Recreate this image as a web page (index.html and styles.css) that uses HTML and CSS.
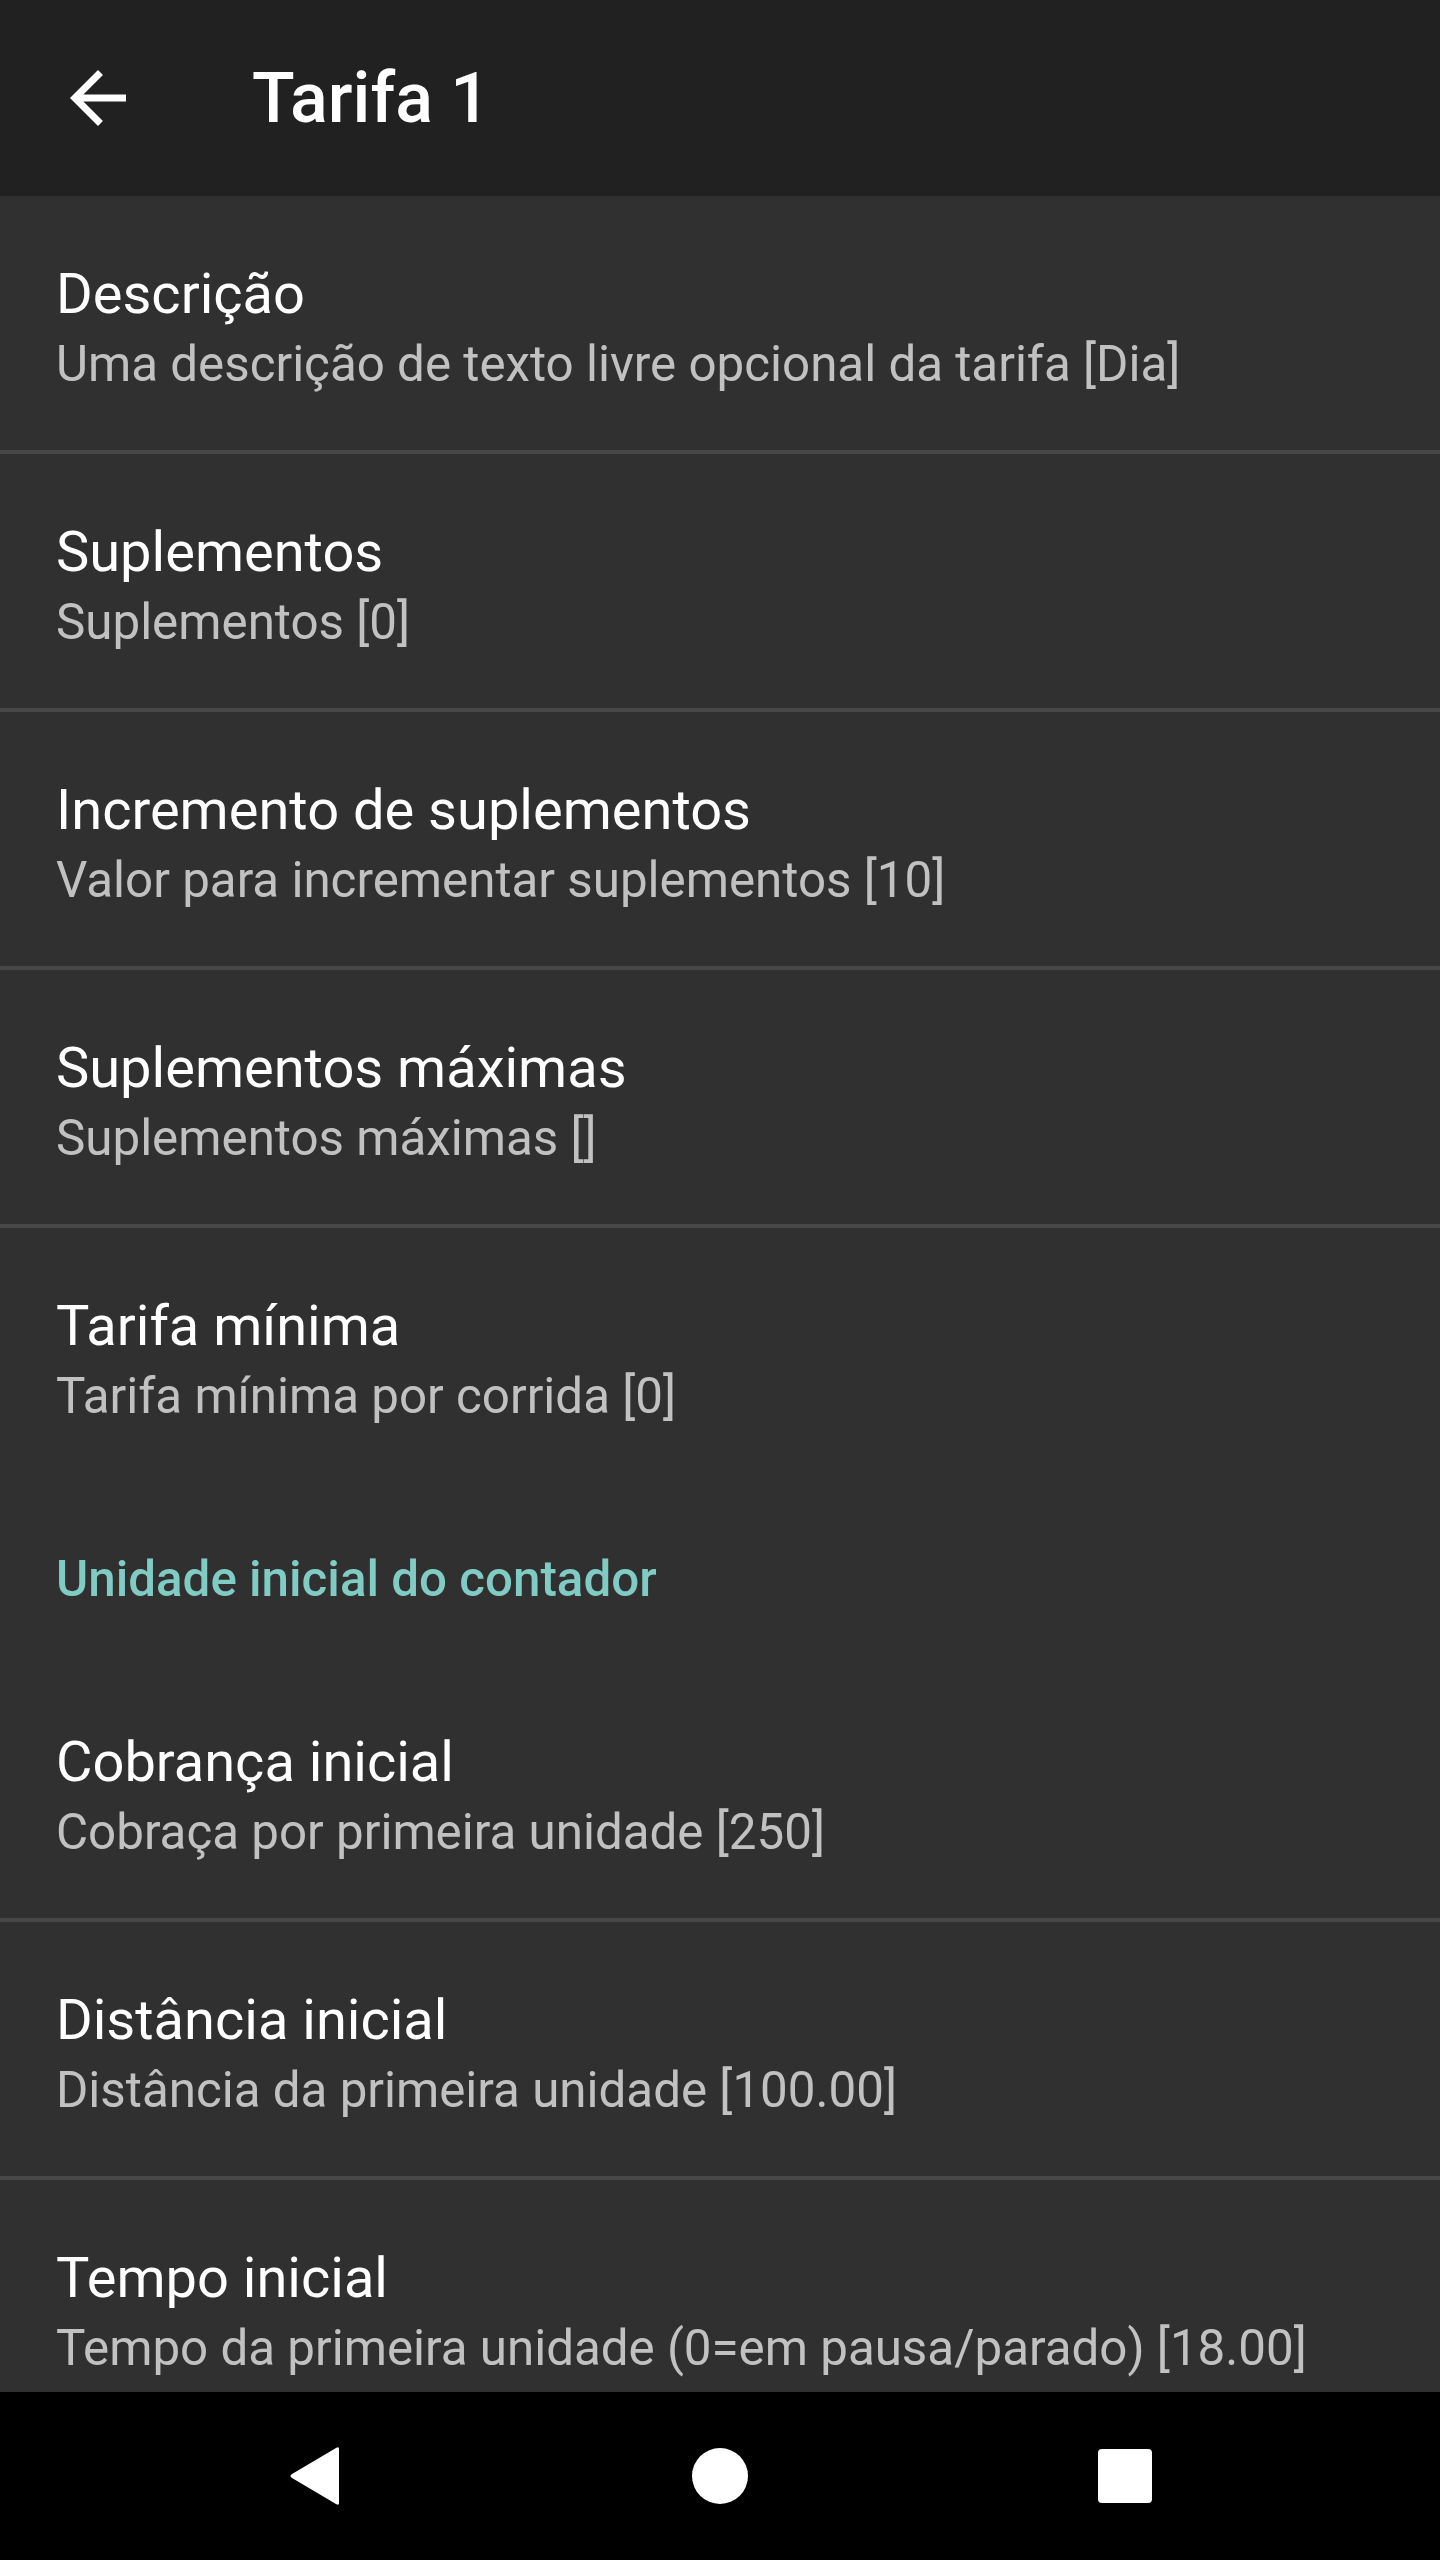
FILE: index.html
```html
<!DOCTYPE html>
<html lang="pt">

<head>
    <meta charset="UTF-8">
    <meta name="viewport" content="width=device-width, initial-scale=1.0">
    <title>Tarifa 1</title>
    <link rel="stylesheet" href="styles.css">
</head>

<body>
    <div class="screen">
        <!-- Toolbar -->
        <header class="toolbar">
            <svg class="back-icon" viewBox="0 0 24 24">
                <path d="M20 11H7.83l5.59-5.59L12 4l-8 8 8 8 1.41-1.41L7.83 13H20v-2z" fill="#fff"/>
            </svg>
            <h1 class="toolbar-title">Tarifa 1</h1>
        </header>

        <!-- Preference list -->
        <main class="prefs">
            <div class="pref">
                <div class="pref-title">Descrição</div>
                <div class="pref-summary">Uma descrição de texto livre opcional da tarifa [Dia]</div>
            </div>
            <div class="divider"></div>
            <div class="pref">
                <div class="pref-title">Suplementos</div>
                <div class="pref-summary">Suplementos [0]</div>
            </div>
            <div class="divider"></div>
            <div class="pref">
                <div class="pref-title">Incremento de suplementos</div>
                <div class="pref-summary">Valor para incrementar suplementos [10]</div>
            </div>
            <div class="divider"></div>
            <div class="pref">
                <div class="pref-title">Suplementos máximas</div>
                <div class="pref-summary">Suplementos máximas []</div>
            </div>
            <div class="divider"></div>
            <div class="pref">
                <div class="pref-title">Tarifa mínima</div>
                <div class="pref-summary">Tarifa mínima por corrida [0]</div>
            </div>

            <div class="category">Unidade inicial do contador</div>

            <div class="pref">
                <div class="pref-title">Cobrança inicial</div>
                <div class="pref-summary">Cobraça por primeira unidade [250]</div>
            </div>
            <div class="divider"></div>
            <div class="pref">
                <div class="pref-title">Distância inicial</div>
                <div class="pref-summary">Distância da primeira unidade [100.00]</div>
            </div>
            <div class="divider"></div>
            <div class="pref">
                <div class="pref-title">Tempo inicial</div>
                <div class="pref-summary">Tempo da primeira unidade (0=em pausa/parado) [18.00]</div>
            </div>
        </main>

        <!-- System navigation bar -->
        <nav class="navbar">
            <div class="nav-slot">
                <svg class="nav-back" viewBox="0 0 52 60">
                    <path d="M50 3 L50 57 Q50 60 47 58 L3 32 Q0 30 3 28 L47 2 Q50 0 50 3 Z" fill="#fff"/>
                </svg>
            </div>
            <div class="nav-slot"><div class="nav-home"></div></div>
            <div class="nav-slot"><div class="nav-recent"></div></div>
        </nav>
    </div>
</body>

</html>
```

FILE: styles.css
```css
/* Base page */
body {
    margin: 0;
    font-family: Roboto, "Noto Sans", Arial, sans-serif;
    background-color: #303030;
}

.screen {
    width: 1440px;
    height: 2560px;
    display: flex;
    flex-direction: column;
    overflow: hidden;
}

/* Toolbar */
.toolbar {
    height: 196px;
    flex-shrink: 0;
    display: flex;
    align-items: center;
    padding-left: 56px;
    background-color: #212121;
}

.back-icon {
    width: 84px;
    height: 84px;
}

.toolbar-title {
    margin: 0 0 0 112px;
    font-size: 70px;
    font-weight: 500;
    color: #fff;
}

/* Preference rows */
.prefs {
    flex: 1;
    overflow: hidden;
}

.pref {
    height: 254px;
    box-sizing: border-box;
    padding: 62px 56px 0;
}

.pref-title {
    font-size: 56px;
    line-height: 72px;
    color: #fff;
}

.pref-summary {
    font-size: 49.3px;
    line-height: 68px;
    color: rgba(255, 255, 255, 0.7);
    white-space: nowrap;
}

.divider {
    height: 4px;
    background-color: #474747;
}

.category {
    height: 182px;
    box-sizing: border-box;
    padding: 65px 56px 0;
    font-size: 49.3px;
    line-height: 64px;
    font-weight: 500;
    color: #80cbc4;
}

/* Navigation bar */
.navbar {
    height: 168px;
    flex-shrink: 0;
    display: flex;
    align-items: center;
    justify-content: center;
    background-color: #000;
}

.nav-slot {
    width: 405px;
    display: flex;
    justify-content: center;
    align-items: center;
}

.nav-back {
    width: 52px;
    height: 60px;
}

.nav-home {
    width: 56px;
    height: 56px;
    border-radius: 50%;
    background-color: #fff;
}

.nav-recent {
    width: 54px;
    height: 54px;
    border-radius: 4px;
    background-color: #fff;
}
```
